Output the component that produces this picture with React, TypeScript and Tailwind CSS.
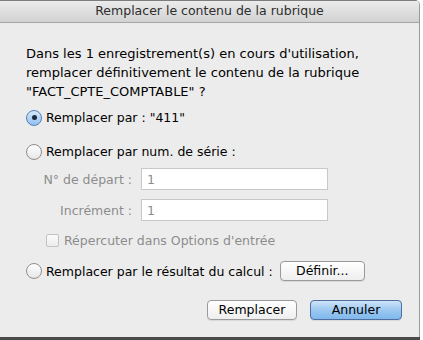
import React from "react";

const font = { fontFamily: '"DejaVu Sans", "Liberation Sans", sans-serif' };

const Radio: React.FC<{ checked?: boolean }> = ({ checked }) => (
  <span
    className={
      "flex h-[16px] w-[16px] shrink-0 items-center justify-center rounded-full border " +
      (checked
        ? "border-[#5a7fb5] bg-gradient-to-b from-[#d7e9fb] to-[#8fc1f0]"
        : "border-[#8e8e8e] bg-gradient-to-b from-[#ffffff] to-[#e6e6e6]")
    }
  >
    {checked && <span className="h-[5px] w-[5px] rounded-full bg-[#1c2a3a]" />}
  </span>
);

const MacButton: React.FC<{ label: string; primary?: boolean; className?: string }> = ({
  label,
  primary,
  className = "",
}) => (
  <button
    type="button"
    className={
      "flex h-[20px] shrink-0 items-center justify-center rounded-[4px] border text-[12.5px] leading-none text-black shadow-[0_1px_0_rgba(0,0,0,0.08)] " +
      (primary
        ? "border-[#4d6e9e] bg-gradient-to-b from-[#cfe4f8] via-[#9cc8f1] to-[#7fb8ec] "
        : "border-[#9a9a9a] bg-gradient-to-b from-[#ffffff] to-[#eeeeee] ") +
      className
    }
  >
    {label}
  </button>
);

const App: React.FC = () => {
  return (
    <div className="flex h-[340px] w-[423px] flex-col bg-white" style={font}>
      <div className="flex h-[337px] w-[420px] flex-col overflow-hidden rounded-tr-[5px] border-r border-[#9a9a9a] bg-[#ececec]">
        <div className="flex h-[23px] shrink-0 items-center justify-center border-t border-b border-t-[#7d7d7d] border-b-[#a6a6a6] bg-gradient-to-b from-[#ebebeb] to-[#d2d2d2] text-[12.5px] text-[#2e2e2e]">
          Remplacer le contenu de la rubrique
        </div>

        <div className="flex flex-1 flex-col pl-[26px] pr-[17px] text-[12.5px] leading-[19px] text-black">
          <p className="mt-[21px] text-[13px] leading-[19px]">
            Dans les 1 enregistrement(s) en cours d'utilisation,
            <br />
            remplacer définitivement le contenu de la rubrique
            <br />
            "FACT_CPTE_COMPTABLE" ?
          </p>

          <div className="mt-[7px] flex h-[19px] items-center gap-[4px]">
            <Radio checked />
            <span>Remplacer par : "411"</span>
          </div>

          <div className="mt-[15px] flex h-[19px] items-center gap-[4px]">
            <Radio />
            <span>Remplacer par num. de série :</span>
          </div>

          <div className="mt-[7px] grid grid-cols-[106px_187px] items-center gap-x-[9px] gap-y-[9px] text-[#8c8c8c]">
            <span className="text-right">N° de départ :</span>
            <div className="flex h-[22px] items-center border border-[#c8c8c8] bg-white pl-[5px]">1</div>
            <span className="text-right">Incrément :</span>
            <div className="flex h-[22px] items-center border border-[#c8c8c8] bg-white pl-[5px]">1</div>
          </div>

          <div className="mt-[10px] ml-[20px] flex h-[19px] items-center gap-[5px] text-[#8c8c8c]">
            <span className="h-[13px] w-[13px] rounded-[2px] border border-[#c2c2c2] bg-gradient-to-b from-[#fbfbfb] to-[#ececec]" />
            <span>Répercuter dans Options d'entrée</span>
          </div>

          <div className="mt-[11px] flex h-[20px] items-center gap-[4px]">
            <Radio />
            <span>Remplacer par le résultat du calcul :</span>
            <MacButton label="Définir..." className="ml-[3px] w-[85px]" />
          </div>

          <div className="mt-[19px] flex justify-end gap-[13px]">
            <MacButton label="Remplacer" className="w-[90px]" />
            <MacButton label="Annuler" primary className="w-[92px]" />
          </div>
        </div>
      </div>
      <div className="h-[3px] w-[420px] bg-[#4a4a4a]" />
    </div>
  );
};

export default App;
